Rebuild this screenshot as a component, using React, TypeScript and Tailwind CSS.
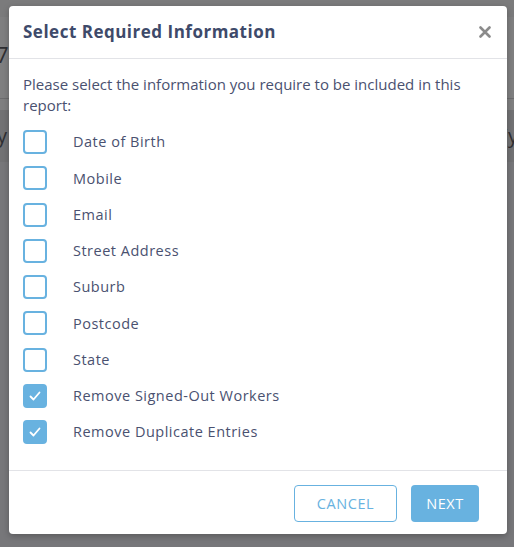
import { useState } from 'react'

const OPTIONS = [
  { key: 'dob', label: 'Date of Birth', checked: false },
  { key: 'mobile', label: 'Mobile', checked: false },
  { key: 'email', label: 'Email', checked: false },
  { key: 'street', label: 'Street Address', checked: false },
  { key: 'suburb', label: 'Suburb', checked: false },
  { key: 'postcode', label: 'Postcode', checked: false },
  { key: 'state', label: 'State', checked: false },
  { key: 'signedOut', label: 'Remove Signed-Out Workers', checked: true },
  { key: 'duplicates', label: 'Remove Duplicate Entries', checked: true },
]

function CheckBox({ checked }: { checked: boolean }) {
  return (
    <span
      className={`flex w-[24px] h-[24px] shrink-0 items-center justify-center rounded-[4px] border-2 border-[#68b2e0] ${
        checked ? 'bg-[#68b2e0]' : 'bg-white'
      }`}
    >
      {checked && (
        <svg width="14" height="14" viewBox="0 0 14 14" fill="none">
          <path d="M2.5 7.5l3 3 6-7" stroke="white" strokeWidth="1.8" strokeLinecap="round" strokeLinejoin="round" />
        </svg>
      )}
    </span>
  )
}

export default function App() {
  const [values, setValues] = useState<Record<string, boolean>>(
    Object.fromEntries(OPTIONS.map(o => [o.key, o.checked]))
  )

  return (
    <div
      className="relative w-[514px] h-[547px] overflow-hidden bg-[#77777a]"
      style={{ fontFamily: '"Open Sans", "Noto Sans", sans-serif' }}
    >
      {/* page behind the overlay */}
      <div className="flex flex-col">
        <div className="h-[17px] bg-[#7b7b7c]" />
        <div className="h-[81px] bg-[#7f7f80] flex items-center">
          <span className="-ml-[4px] mt-[-6px] text-[22px] text-[#2f2f33]">7</span>
        </div>
        <div className="h-px bg-[#6c6c6e]" />
        <div className="h-[11px] bg-[#7f7f80]" />
        <div className="h-[52px] bg-[#727274] flex items-center justify-between">
          <span className="-ml-[3px] text-[20px] text-[#2f2f33]">y</span>
          <span className="-mr-[4px] text-[20px] text-[#2f2f33]">(y</span>
        </div>
      </div>

      {/* modal */}
      <div className="absolute left-[9px] top-[6px] w-[498px] h-[528px] flex flex-col rounded-[4px] bg-white shadow-[0_2px_6px_rgba(0,0,0,0.25)]">
        <div className="h-[53px] flex items-center justify-between pl-[14px] pr-[16px] border-b border-[#e2e3e7]">
          <h2 className="text-[17px] font-bold tracking-[0.5px] text-[#3e4a6a]">Select Required Information</h2>
          <button className="text-[#8b8b8b]">
            <svg width="12" height="12" viewBox="0 0 12 12">
              <path d="M1.5 1.5l9 9M10.5 1.5l-9 9" stroke="currentColor" strokeWidth="2.6" strokeLinecap="round" />
            </svg>
          </button>
        </div>

        <div className="flex-1 pl-[14px] pr-[16px] pt-[15px]">
          <p className="text-[15px] leading-[21px] text-[#4a5170]">
            Please select the information you require to be included in this report:
          </p>
          <div className="mt-[8px] flex flex-col">
            {OPTIONS.map(o => (
              <label
                key={o.key}
                className="h-[36.25px] flex items-center cursor-pointer"
                onClick={() => setValues(v => ({ ...v, [o.key]: !v[o.key] }))}
              >
                <CheckBox checked={values[o.key]} />
                <span className="ml-[26px] text-[14.5px] tracking-[0.5px] text-[#4a5170]">{o.label}</span>
              </label>
            ))}
          </div>
        </div>

        <div className="h-[64px] flex items-center justify-end gap-[14px] pr-[28px] pt-[2px] border-t border-[#e2e3e7]">
          <button className="w-[103px] h-[37px] rounded-[4px] border border-[#68b2e0] text-[14.5px] tracking-[0.6px] text-[#68b2e0]">
            CANCEL
          </button>
          <button className="w-[68px] h-[37px] rounded-[4px] bg-[#68b2e0] text-[14.5px] tracking-[0.6px] text-white">
            NEXT
          </button>
        </div>
      </div>
    </div>
  )
}
